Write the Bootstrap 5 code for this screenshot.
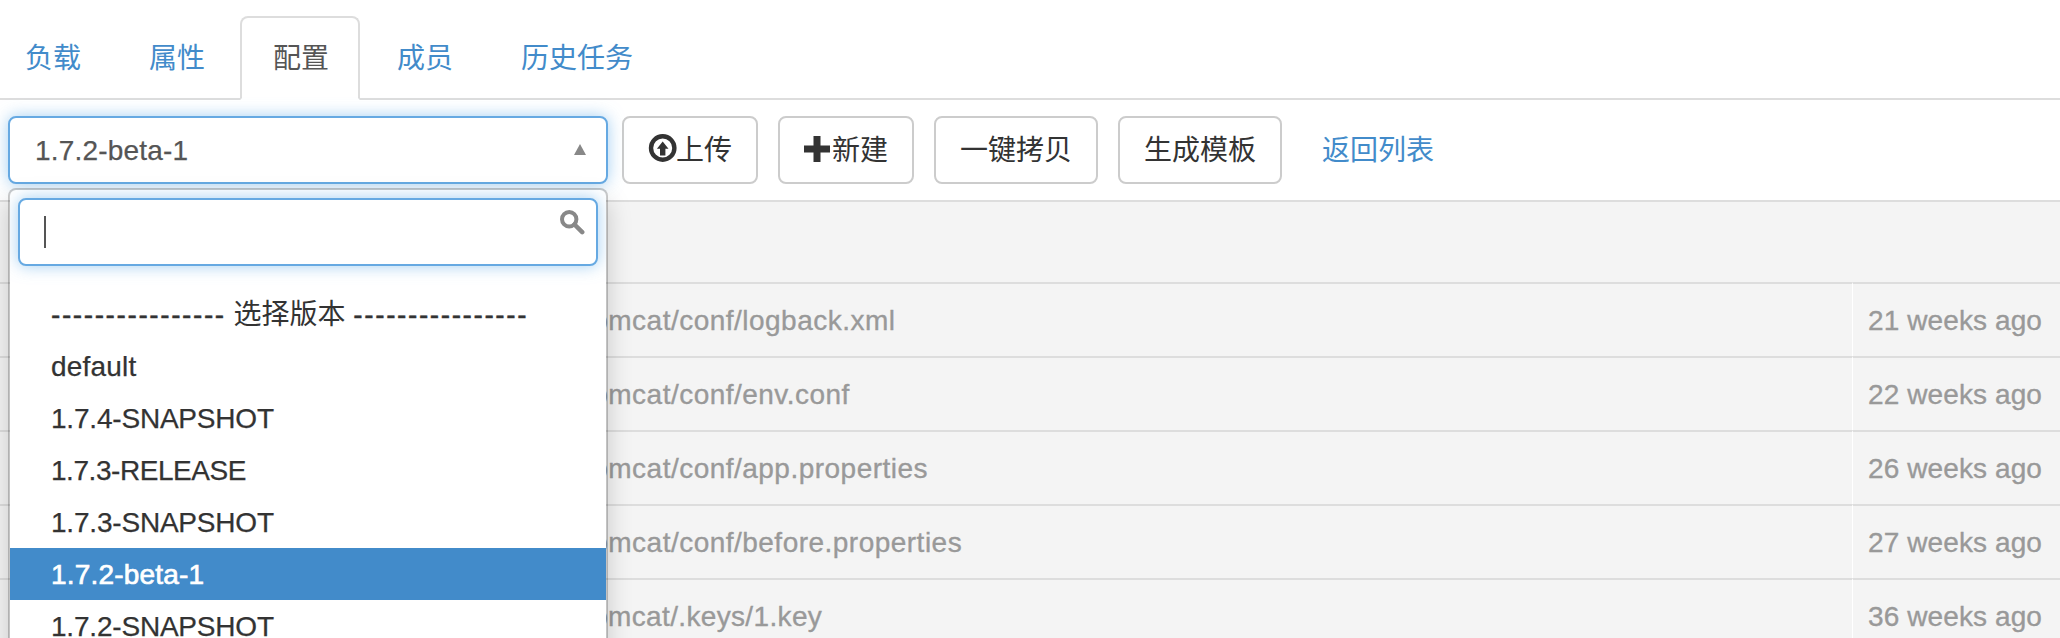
<!DOCTYPE html>
<html lang="zh-CN">
<head>
<meta charset="utf-8">
<title>配置</title>
<link href="https://cdn.jsdelivr.net/npm/bootstrap@5.3.0/dist/css/bootstrap.min.css" rel="stylesheet">
<style>
body{font-family:"Liberation Sans","Noto Sans CJK SC",sans-serif;font-size:28px;line-height:40px;color:#333;background:#fff;height:638px;overflow:hidden}
.nav-tabs{padding-top:16px;margin-left:-8px;border-bottom:2px solid #ddd;gap:4px;--bs-nav-tabs-border-width:2px}
.nav-tabs .nav-link{padding:21px 29px 19px 31px;height:84px;border-width:2px;border-radius:8px 8px 0 0;color:#428bca;margin-bottom:-2px;line-height:40px}
.nav-tabs .nav-link.active{color:#555;background:#fff;border-color:#ddd #ddd #fff}
.toolbar{height:100px;padding:0 8px;gap:20px}
.picker{width:600px;margin-right:-6px}
.glow,.glow:focus{height:68px;border:2px solid #66a9e2;border-radius:8px;box-shadow:0 0 16px rgba(102,175,233,.6);background:#fff}
.current{padding:1px 20px 0 25px;color:#555;letter-spacing:.2px;-webkit-text-stroke:.25px}
.arrow{width:12px;height:11px;fill:#888;margin-top:-3px}
.toolbar .btn{--bs-btn-font-size:28px;--bs-btn-line-height:40px;--bs-btn-padding-x:24px;--bs-btn-padding-y:12px;--bs-btn-border-width:2px;--bs-btn-border-radius:8px;--bs-btn-color:#333;--bs-btn-border-color:#ccc;height:68px;padding-top:13px;padding-bottom:11px}
.toolbar .btn-link{--bs-btn-color:#428bca;--bs-btn-border-color:transparent;--bs-btn-padding-x:18px}
.btn svg{width:28px;height:28px;fill:#333;overflow:visible;margin-top:-2px}
.version-menu{top:72px;left:0;width:600px;height:500px;border:2px solid rgba(0,0,0,.2);border-radius:8px;background:#fff;background-clip:padding-box;box-shadow:0 12px 24px rgba(0,0,0,.175);overflow:hidden;z-index:5}
.search{margin:8px 8px 22px;padding:10px 11px 0 24px}
.caret-line{width:2px;height:32px;background:#555;margin-top:6px}
.search svg{width:25px;height:25px}
.version-menu .list-group-item{border:0;padding:7px 20px 5px 41px;height:52px;line-height:40px;color:#333;background:transparent;-webkit-text-stroke:.25px}
.version-menu .list-group-item.active{background:#428bca;color:#fff;-webkit-text-stroke:.7px #fff;margin-top:0}
.version-menu .list-heading{-webkit-text-stroke:0}
.dashes{letter-spacing:1.6px;-webkit-text-stroke:.4px}
.loose{letter-spacing:.2px}
.tight{letter-spacing:-.2px}
.tighter{letter-spacing:-.45px}
.files{margin:0;color:#999;font-size:28px;table-layout:fixed;--bs-table-bg:#f4f4f4;--bs-table-color:#999;border-collapse:separate;border-spacing:0}
.files td,.files th{padding:17px 16px 15px;border:0;border-top:2px solid #ddd;color:#999;height:74px;line-height:40px;background:#f4f4f4;-webkit-text-stroke:.35px}
.files th{height:82px}
.files .when{width:208px;padding-right:0;white-space:nowrap;letter-spacing:.1px}
.files td.when{border-left:1px solid #fff;padding-left:15px}
.files .path{padding-left:584px;letter-spacing:.48px}
.files .path.keyfile{letter-spacing:.35px}
</style>
</head>
<body>
<ul class="nav nav-tabs">
<li class="nav-item"><a class="nav-link" href="#">负载</a></li>
<li class="nav-item"><a class="nav-link" href="#">属性</a></li>
<li class="nav-item"><a class="nav-link active" href="#">配置</a></li>
<li class="nav-item"><a class="nav-link" href="#">成员</a></li>
<li class="nav-item"><a class="nav-link" href="#">历史任务</a></li>
</ul>
<div class="toolbar d-flex align-items-center">
<div class="picker position-relative flex-shrink-0">
<div class="glow current d-flex align-items-center justify-content-between"><span>1.7.2-beta-1</span><svg class="arrow" viewBox="0 0 12 11"><path d="M6 0l6 11H0z"/></svg></div>
<div class="version-menu position-absolute">
<div class="glow search d-flex justify-content-between"><span class="caret-line"></span>
<svg viewBox="0 0 25 25" fill="none" stroke="#888"><circle cx="9.200" cy="9.200" r="7.200" stroke-width="4"/><path d="M14.500 14.500l7.700 7.700" stroke-width="4.500" stroke-linecap="round"/></svg></div>
<div class="list-group list-group-flush">
<div class="list-group-item list-heading"><span class="dashes">----------------</span> 选择版本 <span class="dashes">----------------</span></div>
<div class="list-group-item loose">default</div>
<div class="list-group-item tight">1.7.4-SNAPSHOT</div>
<div class="list-group-item tighter">1.7.3-RELEASE</div>
<div class="list-group-item tight">1.7.3-SNAPSHOT</div>
<div class="list-group-item active loose">1.7.2-beta-1</div>
<div class="list-group-item tight">1.7.2-SNAPSHOT</div>
</div>
</div>
</div>
<button class="btn d-flex align-items-center"><svg viewBox="0 0 28 28"><circle cx="14.700" cy="12" r="11.700" fill="none" stroke="#333" stroke-width="4.400"/><path d="M14.700 5.500l5.800 7.200h-3.100v6.800h-5.400v-6.800H8.900z"/></svg>上传</button>
<button class="btn d-flex align-items-center"><svg viewBox="0 0 28 28"><path d="M9.500 0h7v9.500H26v7h-9.500V26h-7v-9.500H0v-7h9.500z"/></svg>新建</button>
<button class="btn">一键拷贝</button>
<button class="btn">生成模板</button>
<a class="btn btn-link text-decoration-none" href="#">返回列表</a>
</div>
<table class="table files">
<thead><tr><th></th><th class="when"></th></tr></thead>
<tbody>
<tr><td class="path">tomcat/conf/logback.xml</td><td class="when">21 weeks ago</td></tr>
<tr><td class="path">tomcat/conf/env.conf</td><td class="when">22 weeks ago</td></tr>
<tr><td class="path">tomcat/conf/app.properties</td><td class="when">26 weeks ago</td></tr>
<tr><td class="path">tomcat/conf/before.properties</td><td class="when">27 weeks ago</td></tr>
<tr><td class="path keyfile">tomcat/.keys/1.key</td><td class="when">36 weeks ago</td></tr>
</tbody>
</table>
<script src="https://cdn.jsdelivr.net/npm/bootstrap@5.3.0/dist/js/bootstrap.bundle.min.js"></script>
</body>
</html>
